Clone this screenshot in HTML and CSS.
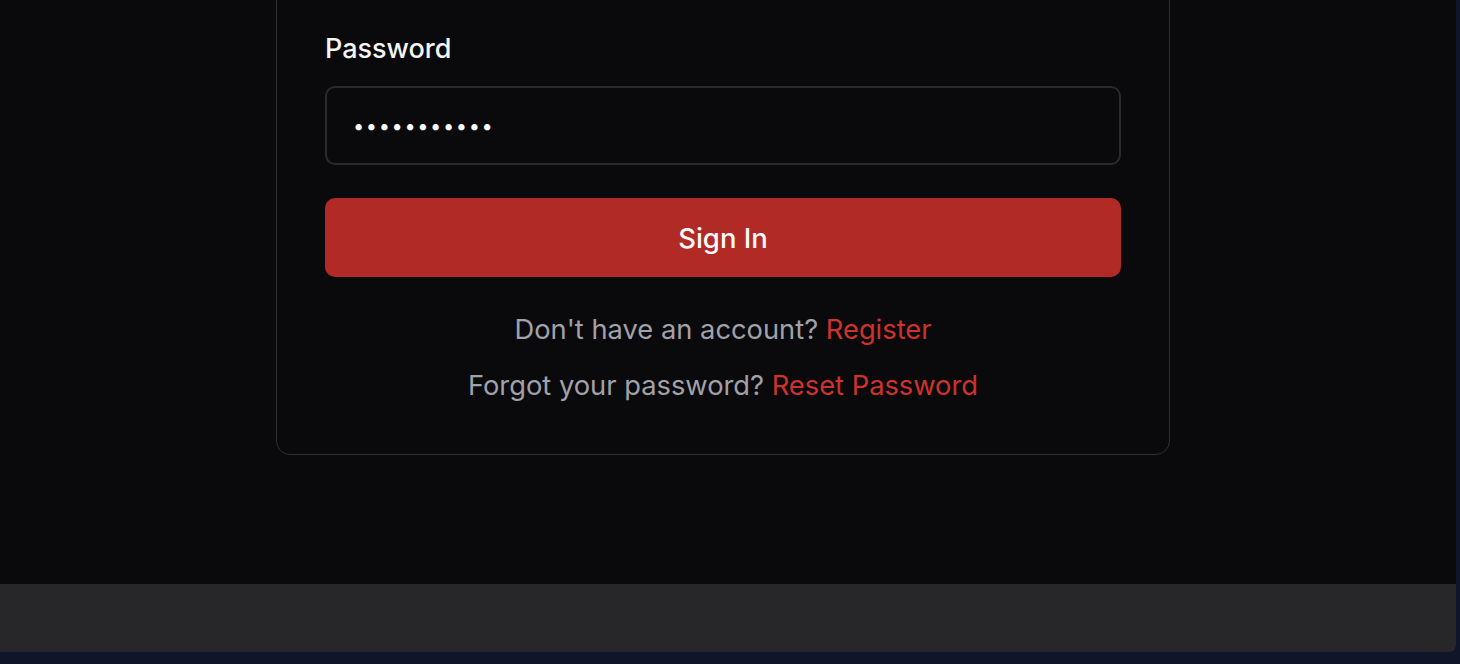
FILE: index.html
```html
<!DOCTYPE html>
<html lang="en">
<head>
<meta charset="utf-8">
<title>Sign In</title>
<link rel="stylesheet" href="styles.css">
</head>
<body>
<div class="frame">
  <main class="main">
    <form class="card">
      <label class="label" for="pw">Password</label>
      <input class="input" id="pw" type="password" value="abcdefghijk">
      <button class="btn" type="button">Sign In</button>
      <p class="meta">Don't have an account? <a href="#" class="link">Register</a></p>
      <p class="meta">Forgot your password? <a href="#" class="link">Reset Password</a></p>
    </form>
  </main>
  <footer class="footer"></footer>
</div>
</body>
</html>
```
FILE: styles.css
```css
* { box-sizing: border-box; }
html, body { margin: 0; padding: 0; }
body {
  background: #0f1629;
  font-family: Inter, "Noto Sans", sans-serif;
  width: 1460px;
  height: 664px;
  overflow: hidden;
}
.frame {
  width: 1456px;
  height: 652px;
  background: #0a0a0c;
  border-bottom-right-radius: 7px;
  overflow: hidden;
  display: flex;
  flex-direction: column;
}
.main {
  flex: 1;
  display: flex;
  justify-content: center;
  align-items: flex-start;
  padding-right: 10px;
  overflow: hidden;
}
.card {
  width: 894px;
  margin: -20px 0 0;
  padding: 50px 48px 50px;
  border: 1.5px solid #2e2e31;
  border-radius: 14px;
  display: flex;
  flex-direction: column;
}
.label {
  color: #f4f4f5;
  font-size: 27px;
  line-height: 36px;
  font-weight: 500;
}
.input {
  margin-top: 19px;
  height: 79px;
  background: #0a0a0c;
  border: 2px solid #2a2a2d;
  border-radius: 10px;
  padding: 0 26px;
  color: #fafafa;
  font-family: Inter, sans-serif;
  font-size: 20px;
  letter-spacing: 1.6px;
  outline: none;
}
.btn {
  margin-top: 33px;
  height: 79px;
  background: #b22a26;
  border: none;
  border-radius: 10px;
  color: #fafafa;
  font-family: Inter, sans-serif;
  font-size: 27.5px;
  font-weight: 500;
}
.meta {
  margin: 35px 0 0;
  text-align: center;
  color: #a1a1aa;
  font-size: 27.3px;
  line-height: 36px;
}
.meta + .meta { margin-top: 20px; }
.link {
  color: #cf322b;
  text-decoration: none;
}
.footer {
  height: 68px;
  background: #272729;
}
```
